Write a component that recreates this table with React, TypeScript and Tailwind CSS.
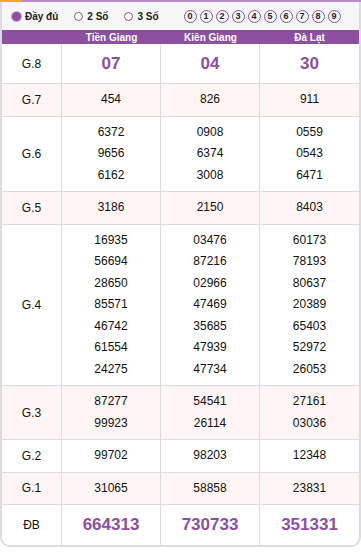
import { Fragment } from "react"

interface Prize {
    label: string
    values: string[][]
    big?: boolean
}

const provinces = ["Tiền Giang", "Kiên Giang", "Đà Lạt"]

const prizes: Prize[] = [
    { label: "G.8", values: [["07"], ["04"], ["30"]], big: true },
    { label: "G.7", values: [["454"], ["826"], ["911"]] },
    { label: "G.6", values: [["6372", "9656", "6162"], ["0908", "6374", "3008"], ["0559", "0543", "6471"]] },
    { label: "G.5", values: [["3186"], ["2150"], ["8403"]] },
    {
        label: "G.4",
        values: [
            ["16935", "56694", "28650", "85571", "46742", "61554", "24275"],
            ["03476", "87216", "02966", "47469", "35685", "47939", "47734"],
            ["60173", "78193", "80637", "20389", "65403", "52972", "26053"],
        ],
    },
    { label: "G.3", values: [["87277", "99923"], ["54541", "26114"], ["27161", "03036"]] },
    { label: "G.2", values: [["99702"], ["98203"], ["12348"]] },
    { label: "G.1", values: [["31065"], ["58858"], ["23831"]] },
    { label: "ĐB", values: [["664313"], ["730733"], ["351331"]], big: true },
]

function Radio({ checked, label }: { checked?: boolean, label: string }) {
    return (
        <label className="flex items-center gap-[4px]">
            {checked ? (
                <span className="w-[9px] h-[9px] rounded-full bg-[#8d4f9f] ring-1 ring-[#c9a6d3]" />
            ) : (
                <span className="w-[9px] h-[9px] rounded-full border border-[#8d4f9f] bg-white" />
            )}
            <span className="text-[10px] font-bold text-[#222]">{label}</span>
        </label>
    )
}

export default function App() {
    return (
        <div className="w-[361px] h-[553px] bg-white font-['Liberation_Sans',Arial,sans-serif]">
            <div className="flex h-[2px]">
                <div className="w-[22px] bg-[#f5a623]" />
                <div className="flex-1 bg-[#b98cc6]" />
            </div>

            <div className="border-x-2 border-b-2 border-[#dcdce0] rounded-b-[10px] overflow-hidden">
                <div className="h-[28px] bg-[#f6f6f6] flex items-center pl-[10px]">
                    <div className="flex items-center gap-[16px]">
                        <Radio checked label="Đầy đủ" />
                        <Radio label="2 Số" />
                        <Radio label="3 Số" />
                    </div>
                    <div className="ml-[25px] flex gap-[3px]">
                        {Array.from({ length: 10 }, (_, i) => (
                            <span key={i} className="w-[13px] h-[13px] rounded-full border border-[#8d4f9f] flex items-center justify-center text-[9px] font-bold text-[#222] leading-none">
                                {i}
                            </span>
                        ))}
                    </div>
                </div>

                <div className="grid grid-cols-[60px_1fr_1fr_1fr]">
                    <div className="h-[14px] bg-[#8d4f9f] border-r border-[#8d4f9f]" />
                    {provinces.map((p) => (
                        <div key={p} className="h-[14px] bg-[#8d4f9f] text-white text-[10px] font-bold flex items-center justify-center">
                            {p}
                        </div>
                    ))}

                    {prizes.map((prize, idx) => {
                        const bg = idx % 2 === 1 ? "bg-[#fff5f5]" : "bg-white"
                        const last = idx === prizes.length - 1
                        const rowBorder = last ? "" : "border-b border-[#dcdce0]"
                        return (
                            <Fragment key={prize.label}>
                                <div className={`${bg} ${rowBorder} border-r border-[#dcdce0] flex items-center justify-center text-[12px] text-[#111]`}>
                                    {prize.label}
                                </div>
                                {prize.values.map((col, ci) => (
                                    <div key={ci} className={`${bg} ${rowBorder} ${ci < 2 ? "border-r border-[#dcdce0]" : ""} flex flex-col items-center justify-center ${prize.big ? "h-[40px]" : "py-[5px]"}`}>
                                        {col.map((v) => (
                                            <span key={v} className={prize.big ? "text-[17px] font-bold text-[#8d4f9f]" : "text-[12px] leading-[21.5px] text-[#111]"}>
                                                {v}
                                            </span>
                                        ))}
                                    </div>
                                ))}
                            </Fragment>
                        )
                    })}
                </div>
            </div>
        </div>
    )
}
